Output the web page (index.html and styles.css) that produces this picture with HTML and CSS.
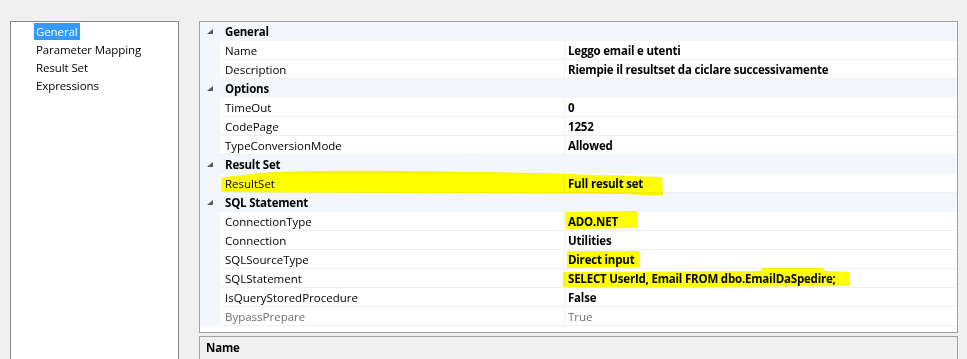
FILE: index.html
```html
<!DOCTYPE html>
<html lang="en">
<head>
  <meta charset="UTF-8">
  <title>Execute SQL Task Editor</title>
  <link rel="stylesheet" href="styles.css">
</head>
<body>
  <div class="page">
    <div class="nav">
      <ul>
        <li><span class="selected">General</span></li>
        <li><span>Parameter Mapping</span></li>
        <li><span>Result Set</span></li>
        <li><span>Expressions</span></li>
      </ul>
    </div>

    <div class="main">
      <div class="grid">
        <div class="cat"><span class="gutter"><svg width="7" height="6"><polygon points="0,5 6,0 6,5" /></svg></span><span class="cat-name">General</span></div>
        <div class="prop"><span class="gutter"></span><span class="name">Name</span><span class="value">Leggo email e utenti</span></div>
        <div class="prop"><span class="gutter"></span><span class="name">Description</span><span class="value">Riempie il resultset da ciclare successivamente</span></div>

        <div class="cat"><span class="gutter"><svg width="7" height="6"><polygon points="0,5 6,0 6,5" /></svg></span><span class="cat-name">Options</span></div>
        <div class="prop"><span class="gutter"></span><span class="name">TimeOut</span><span class="value">0</span></div>
        <div class="prop"><span class="gutter"></span><span class="name">CodePage</span><span class="value">1252</span></div>
        <div class="prop"><span class="gutter"></span><span class="name">TypeConversionMode</span><span class="value">Allowed</span></div>

        <div class="cat"><span class="gutter"><svg width="7" height="6"><polygon points="0,5 6,0 6,5" /></svg></span><span class="cat-name">Result Set</span></div>
        <div class="prop"><span class="gutter"></span><span class="name">ResultSet</span><span class="value">Full result set</span></div>

        <div class="cat"><span class="gutter"><svg width="7" height="6"><polygon points="0,5 6,0 6,5" /></svg></span><span class="cat-name">SQL Statement</span></div>
        <div class="prop"><span class="gutter"></span><span class="name">ConnectionType</span><span class="value">ADO.NET</span></div>
        <div class="prop"><span class="gutter"></span><span class="name">Connection</span><span class="value">Utilities</span></div>
        <div class="prop"><span class="gutter"></span><span class="name">SQLSourceType</span><span class="value">Direct input</span></div>
        <div class="prop"><span class="gutter"></span><span class="name">SQLStatement</span><span class="value">SELECT UserId, Email FROM dbo.EmailDaSpedire;</span></div>
        <div class="prop"><span class="gutter"></span><span class="name">IsQueryStoredProcedure</span><span class="value">False</span></div>
        <div class="prop readonly"><span class="gutter"></span><span class="name">BypassPrepare</span><span class="value">True</span></div>
      </div>

      <div class="help">
        <b>Name</b>
      </div>
    </div>

    <!-- marker strokes drawn over the screenshot -->
    <svg class="marker" width="967" height="359">
      <path d="M221,178 C250,172 300,170 400,171 C520,172 600,175 662,177 L663,195 C650,197 640,194 620,194 L221,192 Z" />
      <path d="M565,212 L637,211 L638,228 L566,229 Z" />
      <path d="M567,251 L640,251 L640,267 L567,268 Z" />
      <path d="M563,272 L760,271 L763,268 L822,268 L826,271 L849,272 L850,286 L700,287 L563,287 Z" />
    </svg>
  </div>
</body>
</html>
```

FILE: styles.css
```css
body {
  margin: 0;
  background: #f0f0f0;
  font-family: "Open Sans", "Noto Sans", sans-serif;
  font-size: 11.5px;
  color: #000;
}

.page {
  position: relative;
  display: flex;
  gap: 20px;
  width: 967px;
  height: 359px;
  padding: 21px 0 0 10px;
  box-sizing: border-box;
  overflow: hidden;
}

.nav {
  width: 169px;
  box-sizing: border-box;
  background: #fff;
  border: 1px solid #828790;
  border-bottom: none;
}

.nav ul {
  list-style: none;
  margin: 0;
  padding: 1px 0 0 23px;
  letter-spacing: -0.1px;
}

.nav li {
  height: 18px;
  line-height: 18px;
}

.nav span {
  padding: 1px 2px;
}

.nav .selected {
  background: #3399ff;
  color: #fff;
}

.main {
  width: 759px;
  display: flex;
  flex-direction: column;
  gap: 3px;
}

.grid {
  height: 316px;
  box-sizing: border-box;
  background: #fff;
  border: 1px solid #a0a0a0;
}

.cat,
.prop {
  display: flex;
  height: 19px;
  line-height: 19px;
  box-sizing: border-box;
}

.cat {
  background: #f3f6fb;
  font-weight: bold;
  letter-spacing: -0.2px;
}

.gutter {
  width: 20px;
  flex: none;
  background: #f3f6fb;
  display: flex;
  align-items: center;
  justify-content: center;
}

.gutter svg {
  fill: #595959;
  margin: 1px 0 0 0;
}

.cat-name {
  padding-left: 5px;
}

.prop .name {
  width: 344px;
  flex: none;
  padding-left: 4px;
  box-sizing: border-box;
  border-right: 1px solid #f0f0f0;
  border-bottom: 1px solid #f0f0f0;
  margin-left: 1px;
}

.prop .value {
  flex: 1;
  padding-left: 3px;
  font-weight: bold;
  letter-spacing: -0.2px;
  border-bottom: 1px solid #f0f0f0;
}

.prop.readonly .name,
.prop.readonly .value {
  color: #6d6d6d;
  font-weight: normal;
  letter-spacing: 0;
}

.help {
  flex: 1;
  border: 1px solid #a0a0a0;
  border-bottom: none;
  padding: 2px 6px;
  line-height: 18px;
  letter-spacing: -0.2px;
}

.marker {
  position: absolute;
  left: 0;
  top: 0;
  pointer-events: none;
  mix-blend-mode: multiply;
}

.marker path {
  fill: #ffff00;
}
```
